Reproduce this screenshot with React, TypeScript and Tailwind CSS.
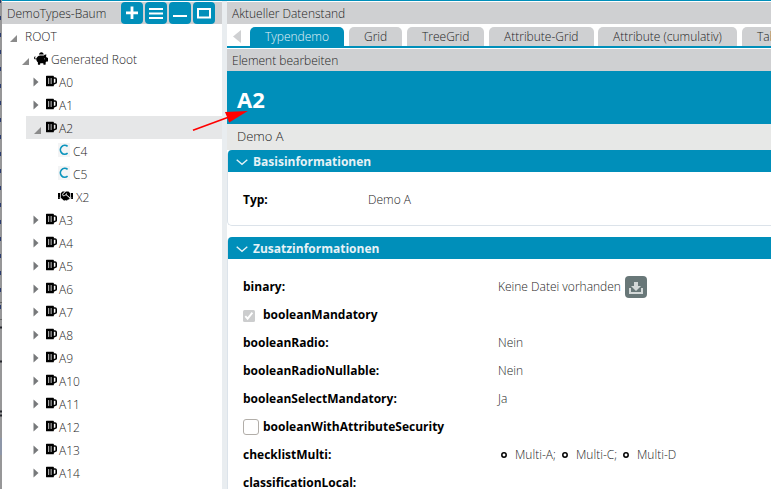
import type { ReactNode } from 'react';
import { FaBeer, FaHandshake, FaPiggyBank } from 'react-icons/fa';

function Collapsed() {
  return (
    <svg className="block" width="6" height="10" viewBox="0 0 6 10">
      <path d="M0.5 0.5 5.5 5 0.5 9.5Z" fill="#77797b" />
    </svg>
  );
}

function Expanded() {
  return (
    <svg className="block" width="7" height="7" viewBox="0 0 7 7">
      <path d="M7 0V7H0Z" fill="#8b8b8b" />
    </svg>
  );
}

function ToolButton({ children }: { children: ReactNode }) {
  return (
    <div className="h-[22px] w-[22px] rounded-[4px] bg-[#008fba]">
      <svg width="22" height="22" viewBox="0 0 22 22" fill="none" stroke="#fff" strokeWidth="2">
        {children}
      </svg>
    </div>
  );
}

function Leaf({ label, open }: { label: string; open?: boolean }) {
  return (
    <div className={`ml-6 flex h-[23px] shrink-0 ${open ? 'bg-[#e6e7e8]' : ''}`}>
      <div className={open ? 'w-[20px] pt-[11px] pl-[8px]' : 'w-[20px] pt-[7px] pl-[7px]'}>
        {open ? <Expanded /> : <Collapsed />}
      </div>
      <FaBeer className="mt-[5px] h-[12px] w-[11px] text-black" preserveAspectRatio="none" />
      <span className="ml-[2px] leading-[26px]">{label}</span>
    </div>
  );
}

function Child({ label }: { label: string }) {
  return (
    <div className="flex h-[23px] shrink-0 pl-[56px]">
      <div className="mt-[4px] h-[14px] w-[12px] bg-[#f3f4f5]">
        <svg className="block" width="12" height="14" viewBox="0 0 12 14">
          <path d="M9.6 3.4A4.4 4.4 0 1 0 9.6 10.2" fill="none" stroke="#0b94bd" strokeWidth="1.7" />
        </svg>
      </div>
      <span className="ml-[3px] leading-[26px]">{label}</span>
    </div>
  );
}

function Tab({ label, className }: { label: string; className: string }) {
  return (
    <div className={`flex h-[19px] shrink-0 rounded-t-[5px] leading-[19px] whitespace-nowrap ${className}`}>
      {label}
    </div>
  );
}

function SectionHeader({ title }: { title: string }) {
  return (
    <div className="flex h-[22px] rounded-tl-[4px] bg-[#008fba] pl-[8px] font-bold text-[#e6f2f6]">
      <svg className="mt-[9px]" width="12" height="7" viewBox="0 0 12 7">
        <path d="M0.7 0.8 6 5.3 11.3 0.8" fill="none" stroke="#e4f2f6" strokeWidth="1.4" />
      </svg>
      <span className="ml-[5px] leading-[24px]">{title}</span>
    </div>
  );
}

function Field({ label, children }: { label: string; children?: ReactNode }) {
  return (
    <div className="flex h-7 shrink-0 items-center">
      <span className="w-[255px] font-bold text-black">{label}</span>
      {children}
    </div>
  );
}

function Circle() {
  return (
    <svg className="-mt-px" width="6" height="6" viewBox="0 0 6 6">
      <circle cx="3" cy="3" r="2.2" fill="none" stroke="#000" strokeWidth="1.5" />
    </svg>
  );
}

/* Narrow slice of the window that lies behind the dialog. */
function Backdrop() {
  return (
    <svg className="block shrink-0" width="2" height="489" viewBox="0 0 2 489">
      <rect width="2" height="489" fill="#979798" />
      {Array.from({ length: 19 }, (_, i) => (
        <rect key={i} y={i * 17 - 1} width="1" height="4" fill="#2b3c6e" />
      ))}
      <path d="M0 302.5H2M0 319.5H2" stroke="#666" />
      <path d="M0 327.5H2M0 361.5H2M0 411.5H2M0 415.5H2" stroke="#26282e" strokeWidth="2" />
      <rect y="438" width="2" height="17" fill="#8d96a8" />
    </svg>
  );
}

export default function App() {
  return (
    <div className="relative flex h-[489px] w-[771px] overflow-hidden bg-white font-['Open_Sans',sans-serif] text-[12px] font-light text-[#1e1e1e]">
      <Backdrop />
      <div className="flex min-w-0 flex-1 border-t border-[#008fba]">
        <div className="flex w-[220px] shrink-0 flex-col overflow-hidden pt-px">
          <div className="flex h-[22px] shrink-0 bg-[#cfd0d2] pl-[5px]">
            <span className="w-[114px] leading-[23px]">DemoTypes-Baum</span>
            <div className="flex gap-[2px]">
              <ToolButton><path d="M11 4.5V17M5 10.8H17" strokeWidth="2.8" /></ToolButton>
              <ToolButton><path d="M4 7H18M4 11.5H18M4 16H18" /></ToolButton>
              <ToolButton><path d="M4 14H18" /></ToolButton>
              <ToolButton><path d="M5 7H17V15.5H5Z" /></ToolButton>
            </div>
          </div>
          <div className="flex h-[23px] shrink-0">
            <div className="w-[23px] pt-[11px] pl-[8px]"><Expanded /></div>
            <span className="leading-[26px]">ROOT</span>
          </div>
          <div className="flex h-[23px] shrink-0">
            <div className="w-[32px] pt-[11px] pl-[20px]"><Expanded /></div>
            <FaPiggyBank className="mt-[5px] h-[13px] w-[14px] text-black" />
            <span className="ml-[3px] leading-[26px]">Generated Root</span>
          </div>
          <Leaf label="A0" />
          <Leaf label="A1" />
          <Leaf label="A2" open />
          <Child label="C4" />
          <Child label="C5" />
          <div className="flex h-[23px] shrink-0 pl-[56px]">
            <FaHandshake className="mt-[5px] h-[12px] w-[15px] text-black" />
            <span className="ml-[3px] leading-[26px]">X2</span>
          </div>
          {['A3', 'A4', 'A5', 'A6', 'A7', 'A8', 'A9', 'A10', 'A11', 'A12', 'A13', 'A14'].map((n) => (
            <Leaf key={n} label={n} />
          ))}
        </div>
        <div className="w-[5px] shrink-0 bg-[#e9edf0]" />
        <div className="flex min-w-0 flex-1 flex-col overflow-hidden pt-px">
          <div className="h-[22px] shrink-0 bg-[#cfd0d2] pl-[5px] leading-[23px]">Aktueller Datenstand</div>
          <div className="flex h-[24px] shrink-0 border-b-2 border-[#008fba] pt-[3px]">
            <div className="w-[23px] shrink-0 pt-[3px] pl-[6px]">
              <svg width="8" height="13" viewBox="0 0 8 13"><path d="M8 0V13L0 6.5Z" fill="#cfd0d2" /></svg>
            </div>
            <Tab label="Typendemo" className="w-[94px] bg-[#008fba] pl-[15px] text-[#e2f2f7]" />
            <Tab label="Grid" className="ml-[5px] w-[53px] bg-[#cfd0d2] pl-[15px]" />
            <Tab label="TreeGrid" className="ml-[5px] w-[77px] bg-[#cfd0d2] pl-[15px]" />
            <Tab label="Attribute-Grid" className="ml-[5px] w-[105px] bg-[#cfd0d2] pl-[15px]" />
            <Tab label="Attribute (cumulativ)" className="ml-[4px] w-[139px] bg-[#cfd0d2] pl-[15px]" />
            <Tab label="Tabelle" className="ml-[5px] w-[73px] bg-[#cfd0d2] pl-[15px]" />
          </div>
          <div className="mt-px h-[22px] shrink-0 bg-[#cfd0d2] pl-[5px] leading-[23px]">Element bearbeiten</div>
          <div className="h-[53px] shrink-0 bg-[#008fba] pt-[15px] pl-[10px] text-[22px] leading-[26px] font-bold text-white">A2</div>
          <div className="h-[26px] shrink-0 bg-[#e7e8e7] pl-[10px] text-[13px] leading-[25px]">Demo A</div>
          <div className="h-[76px] shrink-0 rounded-l-[5px] border-b border-l border-[#dce3ea]">
            <SectionHeader title="Basisinformationen" />
            <div className="mt-[14px] flex h-7 items-center pl-[15px]">
              <span className="w-[125px] font-bold text-black">Typ:</span>
              <span>Demo A</span>
            </div>
          </div>
          <div className="mt-[11px] flex-1 rounded-tl-[5px] border-l border-[#dce3ea]">
            <SectionHeader title="Zusatzinformationen" />
            <div className="flex flex-col pt-[14px] pl-[15px]">
              <Field label="binary:">
                <span>Keine Datei vorhanden</span>
                <span className="ml-[4px] h-[22px] w-[22px] rounded-[4px] bg-[#687778]">
                  <svg width="22" height="22" viewBox="0 0 22 22" fill="#d3d8d8">
                    <path d="M9 6h4v4h3l-5 5-5-5h3zM4 12h2v4h10v-4h2v6H4z" />
                  </svg>
                </span>
              </Field>
              <div className="flex h-7 items-center">
                <svg className="mt-[1px]" width="12" height="12" viewBox="0 0 12 12">
                  <rect width="12" height="12" rx="1.5" fill="#cccdce" />
                  <path d="m2.3 6.2 2.3 2.5 4.8-6" fill="none" stroke="#fff" strokeWidth="1.9" />
                </svg>
                <span className="ml-[8px] font-bold text-black">booleanMandatory</span>
              </div>
              <Field label="booleanRadio:">Nein</Field>
              <Field label="booleanRadioNullable:">Nein</Field>
              <Field label="booleanSelectMandatory:">Ja</Field>
              <div className="flex h-7 items-center">
                <span className="h-4 w-4 rounded-[3px] border border-[#b2aea9] bg-white" />
                <span className="ml-[4px] font-bold text-black">booleanWithAttributeSecurity</span>
              </div>
              <Field label="checklistMulti:">
                <div className="flex items-center pl-[3px]">
                  <Circle /><span className="ml-[8px] w-[47px]">Multi-A;</span>
                  <Circle /><span className="ml-[8px] w-[47px]">Multi-C;</span>
                  <Circle /><span className="ml-[8px]">Multi-D</span>
                </div>
              </Field>
              <Field label="classificationLocal:" />
            </div>
          </div>
        </div>
      </div>
      <svg className="absolute top-[105px] left-[190px]" width="62" height="30" viewBox="0 0 62 30">
        <path d="M3 25.2 43 10.5" stroke="#f00" strokeWidth="1.7" />
        <path d="M57.8 6 35 7 39.2 17.5Z" fill="#f00" />
      </svg>
    </div>
  );
}
